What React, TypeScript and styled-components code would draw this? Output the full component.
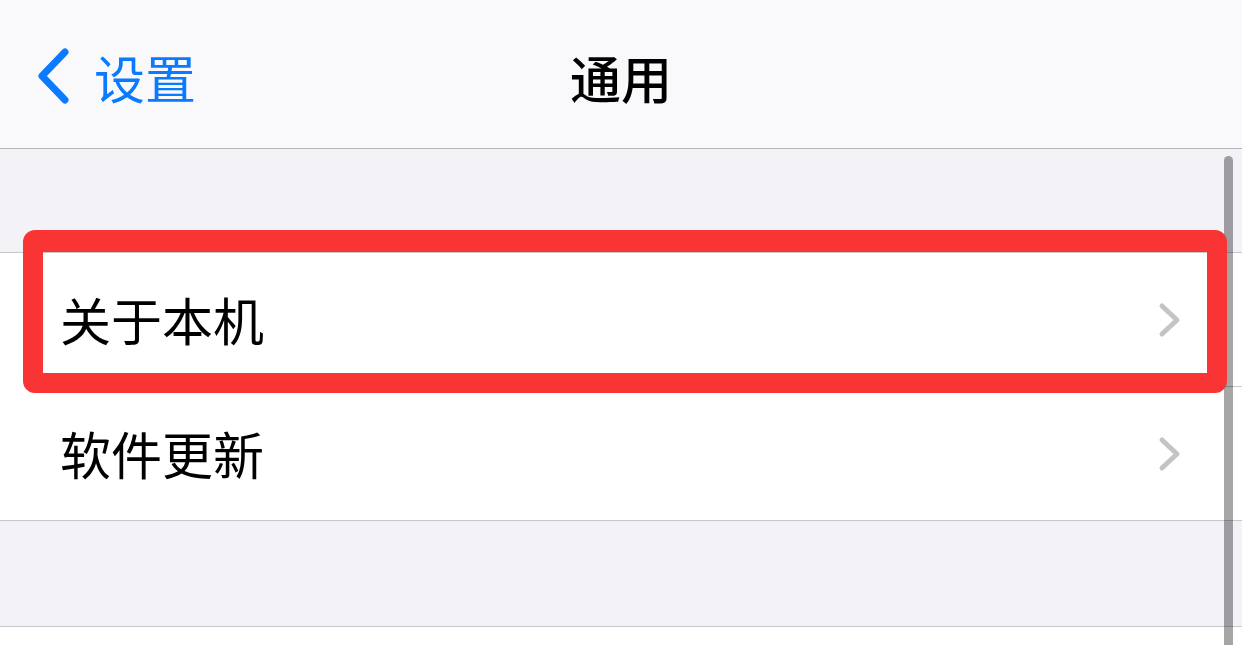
import React from "react";
import styled, { createGlobalStyle } from "styled-components";

const GlobalStyle = createGlobalStyle`
  html, body {
    margin: 0;
    padding: 0;
    background: #f2f2f7;
    font-family: "Noto Sans CJK SC", "Noto Sans", sans-serif;
    overflow: hidden;
  }
`;

const Screen = styled.div`
  position: relative;
  width: 1242px;
  height: 645px;
  overflow: hidden;
  background: #f2f2f7;
`;

const NavBar = styled.header`
  position: relative;
  height: 148px;
  background: #f9f9fb;
  border-bottom: 1px solid #b3b3b6;
  display: flex;
  align-items: center;
  justify-content: center;
  box-sizing: content-box;
`;

const BackButton = styled.div`
  position: absolute;
  left: 36px;
  top: 0;
  bottom: 0;
  display: flex;
  align-items: center;
  gap: 22px;
  color: #0a7aff;
  font-size: 51px;
  padding-top: 6px;
`;

const Title = styled.h1`
  margin: 0;
  font-size: 51px;
  font-weight: 500;
  color: #000;
  padding-top: 6px;
`;

const Spacer = styled.div<{ $h: number }>`
  height: ${(p) => p.$h}px;
`;

const Group = styled.section`
  background: #fff;
  border-top: 1px solid #c8c7cc;
  border-bottom: 1px solid #c8c7cc;
`;

const Row = styled.div<{ $divider?: boolean }>`
  position: relative;
  height: 133px;
  display: flex;
  align-items: center;
  padding-left: 60px;
  padding-right: 58px;
  box-sizing: border-box;
  ${(p) =>
    p.$divider
      ? `&::after {
    content: "";
    position: absolute;
    left: 60px;
    right: 0;
    bottom: -1px;
    height: 1px;
    background: #c8c7cc;
  }
  margin-bottom: 1px;`
      : ""}
`;

const Label = styled.span`
  flex: 1;
  font-size: 51px;
  color: #000;
  padding-bottom: 2px;
`;

const Highlight = styled.div`
  position: absolute;
  left: 23px;
  right: 15px;
  top: -23px;
  bottom: -7px;
  border: 20px solid #f83434;
  border-top-width: 22px;
  border-radius: 12px;
  z-index: 3;
  pointer-events: none;
`;

const LowerGroup = styled.div`
  background: #fff;
  border-top: 1px solid #c8c7cc;
  height: 40px;
`;

const ScrollBar = styled.div`
  position: absolute;
  left: 1224px;
  top: 156px;
  width: 9px;
  height: 520px;
  border-radius: 5px;
  background: rgba(0, 0, 0, 0.35);
  z-index: 2;
`;

const BackChevron = () => (
  <svg width="36" height="60" viewBox="0 0 36 60">
    <path
      d="M29 5 L6 29 L29 53"
      fill="none"
      stroke="#0a7aff"
      strokeWidth="7"
      strokeLinecap="round"
      strokeLinejoin="round"
    />
  </svg>
);

const Disclosure = () => (
  <svg width="26" height="36" viewBox="0 0 26 36">
    <path
      d="M4 4 L19 18 L4 32"
      fill="none"
      stroke="#c4c4c7"
      strokeWidth="5"
      strokeLinecap="round"
      strokeLinejoin="round"
    />
  </svg>
);

export default function App() {
  return (
    <>
      <GlobalStyle />
      <Screen>
        <NavBar>
          <BackButton>
            <BackChevron />
            <span>设置</span>
          </BackButton>
          <Title>通用</Title>
        </NavBar>
        <Spacer $h={103} />
        <Group>
          <Row $divider>
            <Label>关于本机</Label>
            <Disclosure />
            <Highlight />
          </Row>
          <Row>
            <Label>软件更新</Label>
            <Disclosure />
          </Row>
        </Group>
        <Spacer $h={105} />
        <LowerGroup />
        <ScrollBar />
      </Screen>
    </>
  );
}
